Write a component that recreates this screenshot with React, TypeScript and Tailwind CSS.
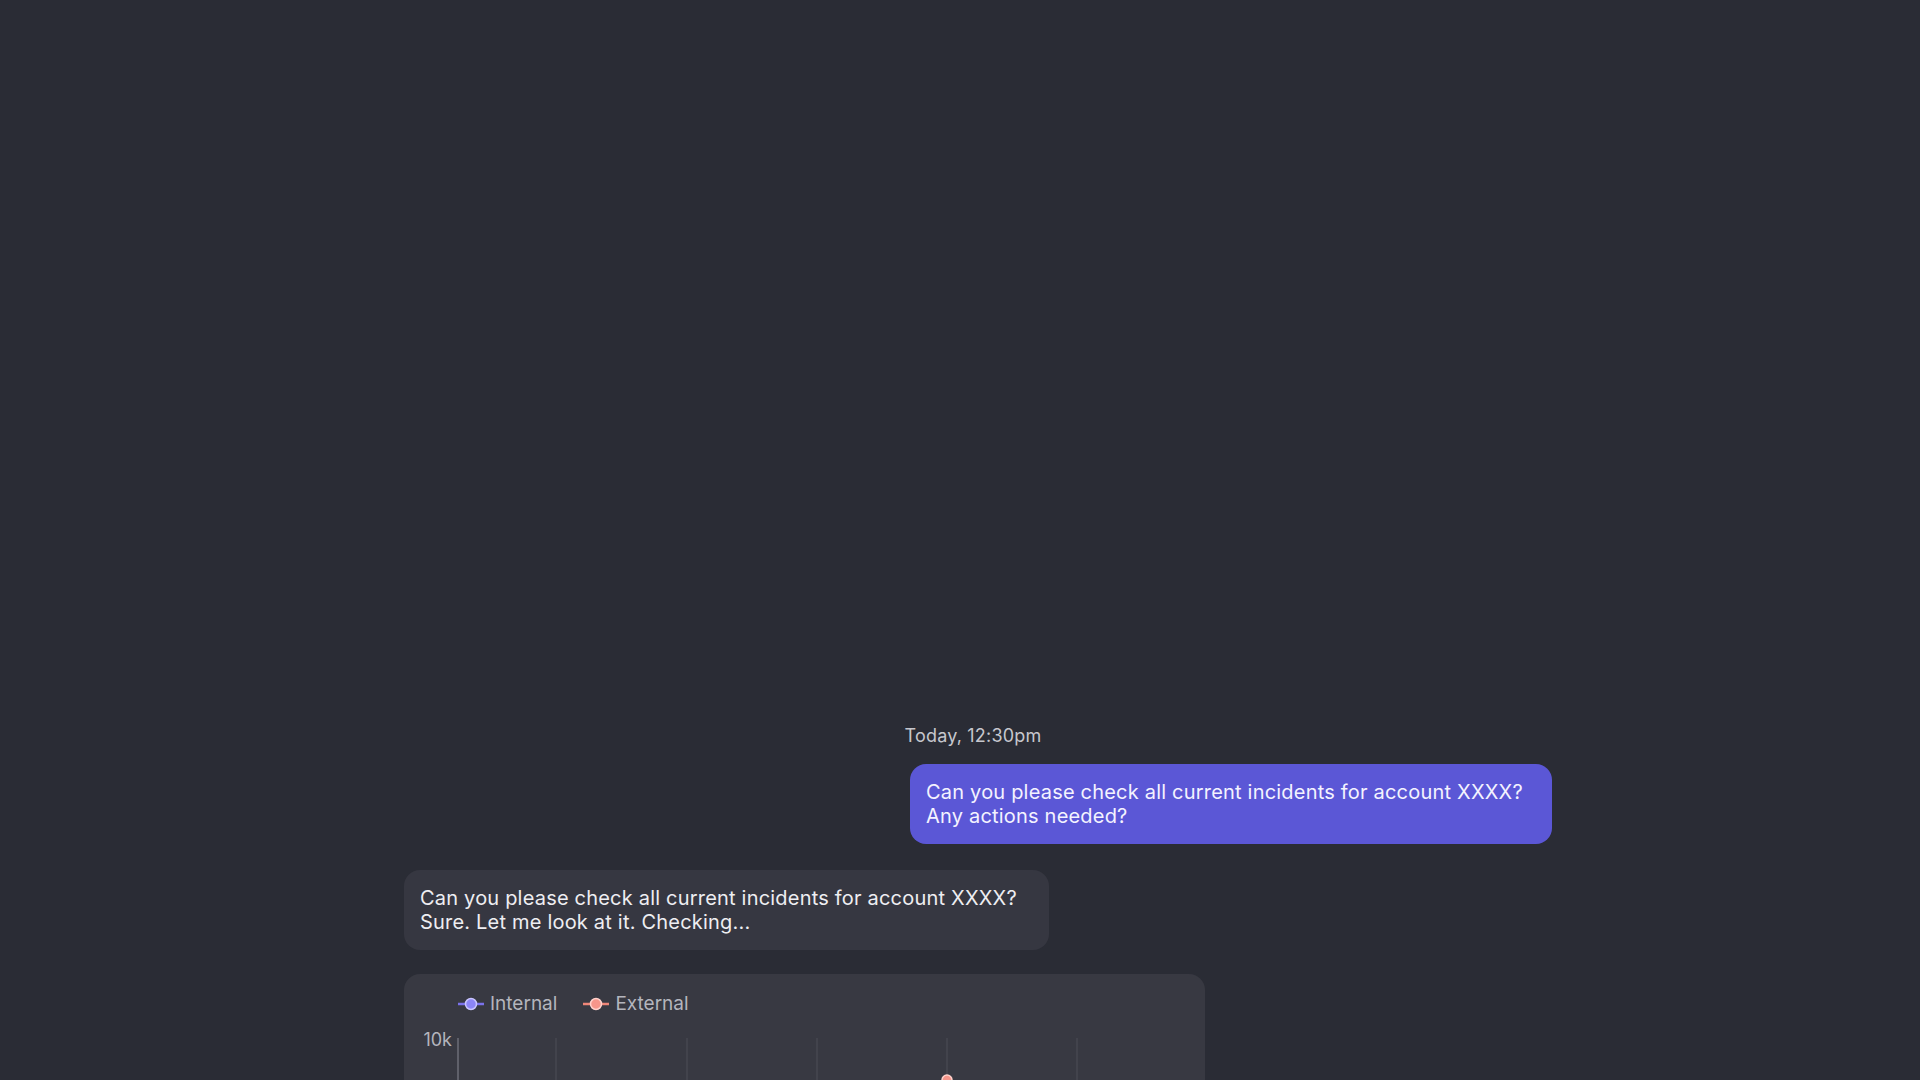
import React from "react";

function LegendIcon({ line, fill, ring }: { line: string; fill: string; ring: string }) {
  return (
    <svg width="26" height="14" viewBox="0 0 26 14" className="shrink-0">
      <line x1="0" y1="7" x2="26" y2="7" stroke={line} strokeWidth="2.5" />
      <circle cx="13" cy="7" r="5.5" fill={fill} stroke={ring} strokeWidth="1.5" />
    </svg>
  );
}

export default function App() {
  const gridXs = [152, 283, 413, 543, 673];
  return (
    <div className="h-[1080px] w-full overflow-hidden bg-[#2a2c35] font-['Inter',sans-serif]">
      <div className="ml-[404px] flex w-[1148px] flex-col pt-[723px]">
        <div className="pr-[10px] text-center text-[18px] leading-[26px] tracking-[0.2px] text-[#c6c7cd]">Today, 12:30pm</div>
        <div className="mt-[15px] w-[642px] self-end rounded-[16px] bg-[#5b57d6] px-[16px] py-[16px] text-[20px] leading-[24px] tracking-[0.2px] text-[#f4f3ff]">
          Can you please check all current incidents for account XXXX?
          <br />
          Any actions needed?
        </div>
        <div className="mt-[26px] w-[645px] self-start rounded-[16px] bg-[#363741] px-[16px] py-[16px] text-[20px] leading-[24px] tracking-[0.2px] text-[#eeeef2]">
          Can you please check all current incidents for account XXXX?
          <br />
          Sure. Let me look at it. Checking...
        </div>
        <div className="mt-[24px] h-[400px] w-[801px] rounded-[16px] bg-[#383942]">
          <div className="flex items-center pl-[54px] pt-[17px] text-[19px] leading-[26px] text-[#b4b5bd]">
            <div className="flex items-center gap-[6px]">
              <LegendIcon line="#7a72ec" fill="#8c85f6" ring="#c9c5ff" />
              <span>Internal</span>
            </div>
            <div className="ml-[26px] flex items-center gap-[6px]">
              <LegendIcon line="#ee8678" fill="#f6968b" ring="#ffd1cb" />
              <span>External</span>
            </div>
          </div>
          <svg width="801" height="360" viewBox="0 0 801 360" className="block">
            <text x="48" y="29" textAnchor="end" fontSize="18" fill="#b4b5bd" fontFamily="Inter, sans-serif">
              10k
            </text>
            <line x1="54" y1="21" x2="54" y2="360" stroke="#6d6e78" strokeWidth="1.5" />
            {gridXs.map((x) => (
              <line key={x} x1={x} y1="21" x2={x} y2="360" stroke="#464751" strokeWidth="1.5" />
            ))}
            <circle cx="543" cy="63" r="5" fill="#f6968b" stroke="#ffd1cb" strokeWidth="1.5" />
          </svg>
        </div>
      </div>
    </div>
  );
}
